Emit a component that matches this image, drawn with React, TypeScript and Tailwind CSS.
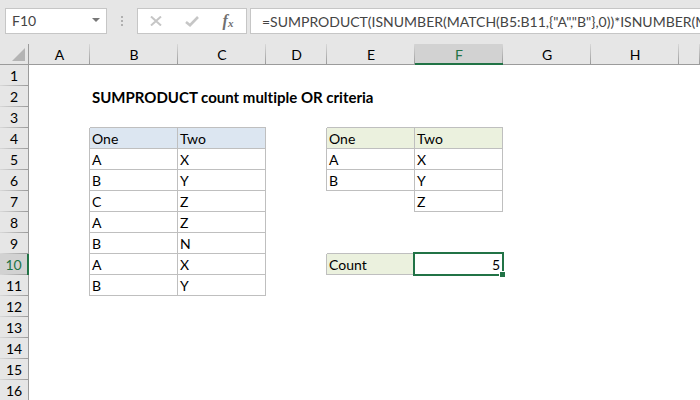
import clsx from "clsx";

interface Cell {
  text: string;
  className: string;
}

const columns = [
  { name: "A", width: "w-[61px]" },
  { name: "B", width: "w-[88px]" },
  { name: "C", width: "w-[88px]" },
  { name: "D", width: "w-[61px]" },
  { name: "E", width: "w-[88px]" },
  { name: "F", width: "w-[88px]" },
  { name: "G", width: "w-[88px]" },
  { name: "H", width: "w-[88px]" },
  { name: "", width: "w-auto" },
];

const rowCount = 16;
const activeColumn = "F";
const activeRow = 10;

const line = "border-[#bfbfbf]";
const blue = "bg-[#dce6f1]";
const green = "bg-[#ebf1de]";

const cells: Record<string, Cell> = {
  B2: { text: "SUMPRODUCT count multiple OR criteria", className: "text-[15px] font-bold" },
  F10: { text: "5", className: "text-right" },
};

// Writes a block of bordered cells into one column, top to bottom.
const fill = (column: string, start: number, values: string[], heading: string) => {
  values.forEach((text, i) => {
    cells[`${column}${start + i}`] = {
      text,
      className: clsx("border-r border-b", line, i === 0 && heading),
    };
  });
};

fill("B", 4, ["One", "A", "B", "C", "A", "B", "A", "B"], blue);
fill("C", 4, ["Two", "X", "Y", "Z", "Z", "N", "X", "Y"], blue);
fill("E", 4, ["One", "A", "B"], green);
fill("F", 4, ["Two", "X", "Y", "Z"], green);
fill("E", 10, ["Count"], green);

// Each cell draws only its right and bottom edge, so the outer top and left
// edges of a block belong to the neighbours.
const edges: Record<string, string> = {
  B3: "border-b",
  C3: "border-b",
  E3: "border-b",
  F3: "border-b",
  E9: "border-b",
  E7: "border-r",
};
[4, 5, 6, 7, 8, 9, 10, 11].forEach((row) => {
  edges[`A${row}`] = "border-r";
});
[4, 5, 6, 10].forEach((row) => {
  edges[`D${row}`] = "border-r";
});

const FormulaBar = () => (
  <div className="flex h-11 items-start pt-2 pl-[5px] text-sm text-[#444444]">
    <div className="flex h-[26px] w-[102px] shrink-0 items-center border border-[#c6c6c6] bg-white">
      <input
        aria-label="Name box"
        defaultValue="F10"
        className="w-0 flex-1 bg-transparent pl-1.5 outline-none"
      />
      <button aria-label="Show names" className="flex h-full w-5 items-center justify-center">
        <svg width="8" height="4" viewBox="0 0 8 4" className="mb-0.5 fill-[#777777]">
          <path d="M0 0h8L4 4z" />
        </svg>
      </button>
    </div>
    <div className="flex h-[26px] w-[30px] shrink-0 flex-col items-center justify-center gap-0.5">
      <span className="size-0.5 bg-[#b0b0b0]" />
      <span className="size-0.5 bg-[#b0b0b0]" />
      <span className="size-0.5 bg-[#b0b0b0]" />
    </div>
    <div className="flex h-[26px] w-[110px] shrink-0 items-center border border-[#c6c6c6] bg-white">
      <button aria-label="Cancel" className="flex h-full flex-1 items-center justify-center">
        <svg width="12" height="10" viewBox="0 0 12 10" className="fill-none stroke-[#c6c6c6]" strokeWidth="2">
          <path d="M1 0.5l10 9M11 0.5l-10 9" />
        </svg>
      </button>
      <button aria-label="Enter" className="flex h-full flex-1 items-center justify-center">
        <svg width="14" height="11" viewBox="0 0 14 11" className="fill-none stroke-[#c6c6c6]" strokeWidth="2.6">
          <path d="M1 6l4 3.2L13 1" />
        </svg>
      </button>
      <button
        aria-label="Insert function"
        className="flex h-full flex-1 items-center justify-center font-['Liberation_Serif',serif] font-bold text-[#707070] italic"
      >
        <span className="text-base leading-4">f</span>
        <span className="pt-1 text-[11px] leading-3">x</span>
      </button>
    </div>
    <input
      aria-label="Formula"
      defaultValue={'=SUMPRODUCT(ISNUMBER(MATCH(B5:B11,{"A","B"},0))*ISNUMBER(MA'}
      className="ml-[3px] h-[26px] min-w-0 flex-1 border border-r-0 border-[#c6c6c6] bg-white pl-[11px] outline-none"
    />
  </div>
);

const ColumnHeader = ({ name }: { name: string }) => (
  <th
    scope="col"
    className={clsx(
      "bg-[linear-gradient(to_bottom,#d8d8d8,#9b9b9b)] bg-[length:1px_100%] bg-right bg-no-repeat p-0 pt-0.5 text-center align-top leading-[17px] font-normal",
      name === activeColumn
        ? "border-b-2 border-[#217346] bg-[#d2d2d2] text-[#217346]"
        : "border-b border-[#9b9b9b] bg-[#e6e6e6]",
    )}
  >
    {name}
  </th>
);

const RowHeader = ({ row }: { row: number }) => (
  <th
    scope="row"
    className={clsx(
      "bg-[linear-gradient(to_right,#d8d8d8,#9b9b9b)] bg-[length:100%_1px] bg-bottom bg-no-repeat p-0 pt-px text-center font-normal",
      row === activeRow
        ? "border-r-2 border-[#217346] bg-[#d2d2d2] text-[#217346]"
        : "border-r border-[#9b9b9b] bg-[#e6e6e6]",
    )}
  >
    {row}
  </th>
);

const GridCell = ({ id }: { id: string }) => {
  const cell = cells[id];
  const active = id === `${activeColumn}${activeRow}`;
  return (
    <td
      className={clsx(
        "relative p-0 pt-px pl-0.5 leading-[19px] whitespace-nowrap [font-variant-ligatures:none]",
        cell?.className,
        edges[id] && [edges[id], line],
        active && "border-r border-b border-[#217346] pr-0.5",
      )}
    >
      {cell?.text}
      {active && (
        <span className="absolute -inset-0.5 border-2 border-[#217346]">
          <span className="absolute -right-[3px] -bottom-[3px] size-1.5 border-t border-l border-white bg-[#217346]" />
        </span>
      )}
    </td>
  );
};

export default function App() {
  const rows = Array.from({ length: rowCount }, (_, i) => i + 1);
  return (
    <main className="h-screen overflow-hidden bg-[#e6e6e6] font-['Lato',sans-serif] text-black">
      <FormulaBar />
      <table className="w-full table-fixed border-separate border-spacing-0 bg-white text-sm leading-5">
        <colgroup>
          <col className="w-[29px]" />
          {columns.map((column) => (
            <col key={column.name} className={column.width} />
          ))}
        </colgroup>
        <thead>
          <tr className="h-[21px]">
            <td className="border-r border-b border-[#9b9b9b] bg-[#e6e6e6] p-0">
              <svg width="13" height="13" viewBox="0 0 13 13" className="ml-3 fill-[#b4b4b4]">
                <path d="M13 0v13H0z" />
              </svg>
            </td>
            {columns.map((column) => (
              <ColumnHeader key={column.name} name={column.name} />
            ))}
          </tr>
        </thead>
        <tbody>
          {rows.map((row) => (
            <tr key={row} className="h-[21px]">
              <RowHeader row={row} />
              {columns.map((column) => (
                <GridCell key={column.name} id={`${column.name}${row}`} />
              ))}
            </tr>
          ))}
        </tbody>
      </table>
    </main>
  );
}
